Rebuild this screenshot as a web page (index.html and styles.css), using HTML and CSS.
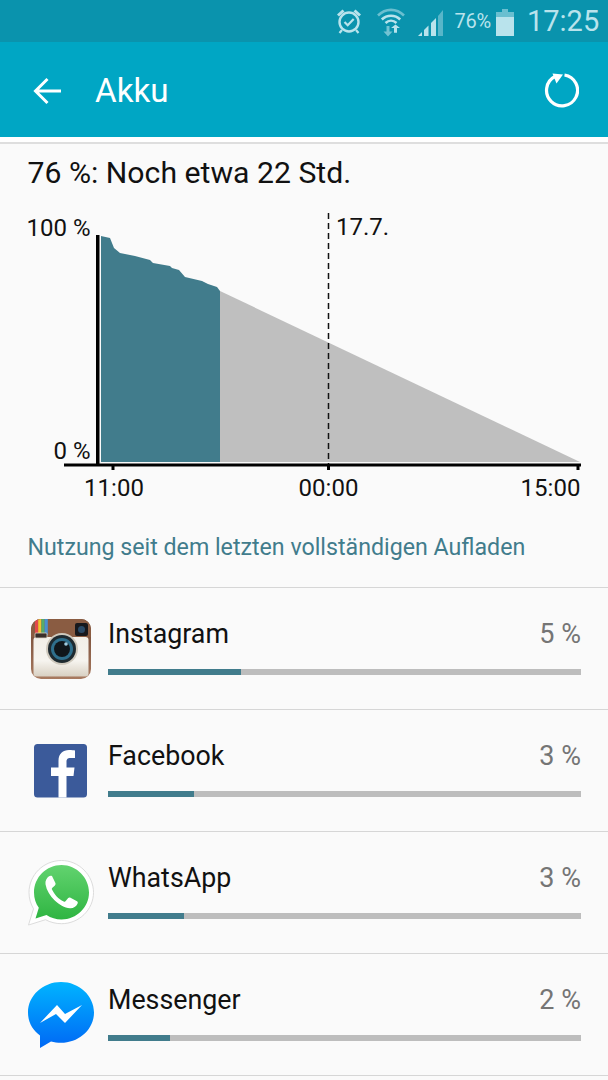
FILE: index.html
```html
<!DOCTYPE html>
<html lang="de">
<head>
    <meta charset="UTF-8">
    <title>Akku</title>
    <link rel="stylesheet" href="styles.css">
</head>
<body>
    <div class="status-bar">
        <svg class="st-alarm" width="26" height="28" viewBox="0 0 26 28">
            <circle cx="13" cy="15" r="9.5" fill="none" stroke="currentColor" stroke-width="2.4"/>
            <path d="M8.5 15l3.2 3.2 6-6.2" fill="none" stroke="currentColor" stroke-width="2.2"/>
            <path d="M1 7.5L6.5 2.5 8.5 4.5 3 9.5zM25 7.5L19.5 2.5 17.5 4.5 23 9.5z" fill="currentColor"/>
            <path d="M6 23l-2.5 3M20 23l2.5 3" stroke="currentColor" stroke-width="2.2"/>
        </svg>
        <svg class="st-wifi" width="28" height="30" viewBox="0 0 28 30">
            <path d="M1 8.5C8.500 1 19.500 1 27 8.500" fill="none" stroke="currentColor" stroke-width="2.600" opacity=".55"/>
            <path d="M4.800 12.500C10 7.500 18 7.500 23.200 12.500" fill="none" stroke="currentColor" stroke-width="2.600"/>
            <path d="M8.500 16C11.800 13 16.200 13 19.500 16" fill="none" stroke="currentColor" stroke-width="2.600"/>
            <path d="M11.500 25V19.500h3v5.500h3L13 30l-4.500-5z" transform="translate(-2 -.5)" fill="currentColor" opacity=".6"/>
            <path d="M18 14.500l4.500 5h-3V26h-3v-6.500h-3z" transform="translate(.5 7) scale(1 .72)" fill="currentColor"/>
        </svg>
        <svg class="st-signal" width="28" height="28" viewBox="0 0 28 28">
            <path d="M1 27l4-4v4z" fill="currentColor"/>
            <path d="M7 27v-6l4.500-4.500V27z" fill="currentColor"/>
            <path d="M14 27V14l5-5v18z" fill="currentColor"/>
            <path d="M21 27V7l5-6v26z" fill="currentColor" opacity=".45"/>
        </svg>
        <span class="st-pct">76%</span>
        <svg class="st-batt" width="18" height="27" viewBox="0 0 18 27">
            <path d="M6 0h6v3h6v5H0V3h6z" fill="currentColor" opacity=".55"/>
            <rect y="8" width="18" height="19" fill="currentColor"/>
        </svg>
        <span class="st-time">17:25</span>
    </div>

    <header class="app-bar">
        <svg class="back" width="30" height="28" viewBox="0 0 30 28">
            <path d="M28 14H3M14.500 2L2.500 14l12 12" fill="none" stroke="#fff" stroke-width="3"/>
        </svg>
        <h1>Akku</h1>
        <svg class="reload" width="36" height="36" viewBox="0 0 36 36">
            <path d="M12 4.500A15.500 15.500 0 1 0 21.500 3" fill="none" stroke="#fff" stroke-width="3.200"/>
            <path d="M9.500 1.500l10.500 1-6.500 9z" fill="#fff"/>
        </svg>
    </header>
    <div class="bar-gap"></div>

    <main class="content">
        <div class="estimate">76 %: Noch etwa 22 Std.</div>

        <svg class="chart" width="608" height="311" viewBox="0 0 608 311">
            <g transform="translate(0 -193)">
                <polygon points="220,291 580,462 220,462" fill="#bfbfbf"/>
                <polygon points="101,236 110,238 114,248 120,253 135,256 150,260 153,263 170,266 172,268 179,270 185,277 202,281 208,284 217,287 220,291 220,462 101,462" fill="#417c8c"/>
                <path d="M328.500 213V464" stroke="#111" stroke-width="1.500" stroke-dasharray="6 4"/>
                <rect x="96" y="235" width="3.500" height="230" fill="#000"/>
                <rect x="64" y="463.500" width="517" height="3" fill="#000"/>
                <rect x="111.500" y="466" width="3" height="4" fill="#000"/>
                <rect x="327" y="466" width="3" height="4" fill="#000"/>
                <rect x="576.500" y="466" width="3" height="4" fill="#000"/>
                <text class="chart-label" x="90.500" y="236" text-anchor="end">100 %</text>
                <text class="chart-label" x="90.500" y="459" text-anchor="end">0 %</text>
                <text class="chart-label" x="336" y="235">17.7.</text>
                <text class="chart-label" x="114" y="496" text-anchor="middle">11:00</text>
                <text class="chart-label" x="328.500" y="496" text-anchor="middle">00:00</text>
                <text class="chart-label" x="550.500" y="496" text-anchor="middle">15:00</text>
            </g>
        </svg>

        <div class="section-title">Nutzung seit dem letzten vollständigen Aufladen</div>

        <ul class="usage-list">
            <li class="usage-row">
                <svg class="app-icon" width="66" height="66" viewBox="0 0 66 66">
                    <defs>
                        <linearGradient id="igBody" x1="0" y1="0" x2="0" y2="1">
                            <stop offset="0" stop-color="#f2efe8"/>
                            <stop offset=".6" stop-color="#f6f4ef"/>
                            <stop offset="1" stop-color="#d8d0c2"/>
                        </linearGradient>
                        <linearGradient id="igEdge" x1="0" y1="0" x2="0" y2="1">
                            <stop offset="0" stop-color="#6f4632"/>
                            <stop offset="1" stop-color="#a87a60"/>
                        </linearGradient>
                        <clipPath id="igClip"><rect x="3" y="3" width="60" height="60" rx="10"/></clipPath>
                    </defs>
                    <rect x="3" y="3" width="60" height="60" rx="10" fill="url(#igEdge)"/>
                    <g clip-path="url(#igClip)">
                        <rect x="3" y="3" width="60" height="18" fill="#8a5c42"/>
                        <rect x="5.500" y="21" width="55" height="39.500" rx="3" fill="url(#igBody)"/>
                        <rect x="7" y="3" width="3.200" height="16" fill="#e2484a"/>
                        <rect x="10.200" y="3" width="3.200" height="16" fill="#f2c230"/>
                        <rect x="13.400" y="3" width="3.200" height="16" fill="#55ad6b"/>
                        <rect x="16.600" y="3" width="3.200" height="16" fill="#4a8fd0"/>
                    </g>
                    <rect x="7" y="17" width="12" height="5" rx="1" fill="#3a2f2a" stroke="#d9d2c4" stroke-width=".8"/>
                    <rect x="47" y="7" width="13" height="13" rx="2" fill="#17181c"/>
                    <circle cx="53.500" cy="13.500" r="3.500" fill="#2b4a66"/>
                    <circle cx="34" cy="33" r="16" fill="#cfc9bd"/>
                    <circle cx="34" cy="33" r="14" fill="#1e2a30"/>
                    <circle cx="34" cy="33" r="11" fill="#2f6f8c"/>
                    <circle cx="34" cy="33" r="8" fill="#10161a"/>
                    <circle cx="38" cy="28" r="1.800" fill="#9ecbe0"/>
                </svg>
                <div class="usage-main">
                    <div class="usage-head"><span class="app-name">Instagram</span><span class="app-pct">5 %</span></div>
                    <div class="track"><div class="fill" style="width: 133px"></div></div>
                </div>
            </li>
            <li class="usage-row">
                <svg class="app-icon" width="66" height="66" viewBox="0 0 66 66">
                    <rect x="6" y="6" width="53" height="53.500" rx="3.500" fill="#3b5a9a"/>
                    <path d="M38.500 59.500V38h7l1-8.500h-8V24c0-2.500.8-4 4.200-4H47v-7.500c-1-.2-3.300-.4-6-.4-6 0-10.500 3.800-10.500 10.500v7H23V38h7.500v21.500z" fill="#fff"/>
                </svg>
                <div class="usage-main">
                    <div class="usage-head"><span class="app-name">Facebook</span><span class="app-pct">3 %</span></div>
                    <div class="track"><div class="fill" style="width: 86px"></div></div>
                </div>
            </li>
            <li class="usage-row">
                <svg class="app-icon" width="66" height="66" viewBox="0 0 66 66">
                    <defs>
                        <linearGradient id="waGreen" x1="0" y1="0" x2="0" y2="1">
                            <stop offset="0" stop-color="#62d36f"/>
                            <stop offset="1" stop-color="#2fb542"/>
                        </linearGradient>
                    </defs>
                    <path d="M33.500 0.500C15.500 0.500 1 15 1 32.500c0 6 1.700 11.500 4.500 16.300L0.500 65l17-5.300c4.700 2.500 10 4 16 4 17.500 0 32-14 32-31.200S51 .5 33.500 .5z" fill="#fff" stroke="#dcdcdc"/>
                    <path d="M33.500 5C18.500 5 6 17.300 6 32.500c0 5.700 1.800 11 4.800 15.300L7.500 58.500l11-3.500c4.400 2.900 9.500 4.500 15 4.500 15.200 0 27.500-12.300 27.500-27S48.700 5 33.500 5z" fill="url(#waGreen)"/>
                    <path d="M24 16c-1-.5-2-.5-3 .3-2.500 2-4 4.500-3.500 8 1 6 4.500 11.500 9 16 4.500 4.300 10 7.500 15.500 8 3 .3 6-1.500 7.500-4.500.5-1 .4-2-.5-2.500l-6.500-3.500c-1-.5-1.800-.3-2.500.5l-2.300 2.800c-.5.600-1.200.7-2 .3-2.700-1.300-5-3-7-5-2-2-3.500-4.300-4.700-6.800-.3-.7-.2-1.400.4-1.900l2.500-2.300c.7-.7.8-1.500.5-2.400z" fill="#fff"/>
                </svg>
                <div class="usage-main">
                    <div class="usage-head"><span class="app-name">WhatsApp</span><span class="app-pct">3 %</span></div>
                    <div class="track"><div class="fill" style="width: 76px"></div></div>
                </div>
            </li>
            <li class="usage-row">
                <svg class="app-icon" width="66" height="66" viewBox="0 0 66 66">
                    <defs>
                        <linearGradient id="fbmBlue" x1="0" y1="0" x2="0" y2="1">
                            <stop offset="0" stop-color="#00b4ff"/>
                            <stop offset="1" stop-color="#0068f5"/>
                        </linearGradient>
                    </defs>
                    <path d="M33 0C15 0 0 13.500 0 30.500c0 9.500 4.500 17.500 12 23V66l11-6.500c3.200.9 6.500 1.300 10 1.300 18 0 33-13.500 33-30.300S51 0 33 0z" fill="url(#fbmBlue)"/>
                    <path d="M12 41L29 23l8 9 17-9-17 18-9-9z" fill="#fff"/>
                </svg>
                <div class="usage-main">
                    <div class="usage-head"><span class="app-name">Messenger</span><span class="app-pct">2 %</span></div>
                    <div class="track"><div class="fill" style="width: 62px"></div></div>
                </div>
            </li>
        </ul>
    </main>
</body>
</html>
```

FILE: styles.css
```css
* {
    margin: 0;
    padding: 0;
    box-sizing: border-box;
}

html, body {
    height: 1080px;
    overflow: hidden;
}

body {
    width: 608px;
    background: #fafafa;
    font-family: Roboto, sans-serif;
    color: #111;
}

.status-bar {
    height: 42px;
    background: #0a93ad;
    color: #b9e3ec;
    display: flex;
    align-items: center;
    padding-right: 10px;
    justify-content: flex-end;
}

.st-alarm { margin-right: 15px; }
.st-wifi { margin-right: 12px; margin-top: 2px; }
.st-signal { margin-right: 9px; margin-top: 3px; }
.st-batt { margin: 2px 13px 0 5px; }

.st-pct {
    font-size: 20px;
    letter-spacing: -0.2px;
}

.st-time {
    font-size: 29px;
    width: 71px;
}

.app-bar {
    height: 95px;
    background: #00a6c4;
    display: flex;
    align-items: center;
    padding: 0 29px 0 33px;
    color: #fff;
}

.app-bar h1 {
    font-size: 33.200px;
    font-weight: 400;
    margin: 1px 0 0 32px;
    flex: 1;
}

.back { margin-top: 2px; }

.bar-gap {
    height: 7px;
    background: #fff;
    border-bottom: 2px solid #dedede;
}

.estimate {
    font-size: 30.200px;
    line-height: 34px;
    padding: 12px 0 0 27.500px;
    height: 49px;
    color: #111;
}

.chart {
    display: block;
}

.chart-label {
    font-family: Roboto, sans-serif;
    font-size: 24px;
    fill: #111;
}

.section-title {
    font-size: 23.200px;
    line-height: 28px;
    color: #417c8c;
    padding-left: 27.500px;
    margin-top: 29px;
    height: 54px;
}

.usage-list {
    list-style: none;
    border-top: 1px solid #d6d6d6;
}

.usage-row {
    height: 122px;
    border-bottom: 1px solid #d6d6d6;
    display: grid;
    grid-template-columns: 66px 1fr;
    column-gap: 14px;
    align-items: center;
    padding: 0 27px 0 28px;
}

.usage-head {
    display: flex;
    justify-content: space-between;
    align-items: baseline;
    height: 48px;
    line-height: 26px;
}

.app-name {
    font-size: 26.800px;
    color: #111;
}

.app-pct {
    font-size: 27px;
    color: #757575;
}

.usage-main {
    padding: 3px 0 4px;
}

.track {
    height: 6px;
    background: #bdbdbd;
}

.fill {
    height: 100%;
    background: #417c8c;
}
```
